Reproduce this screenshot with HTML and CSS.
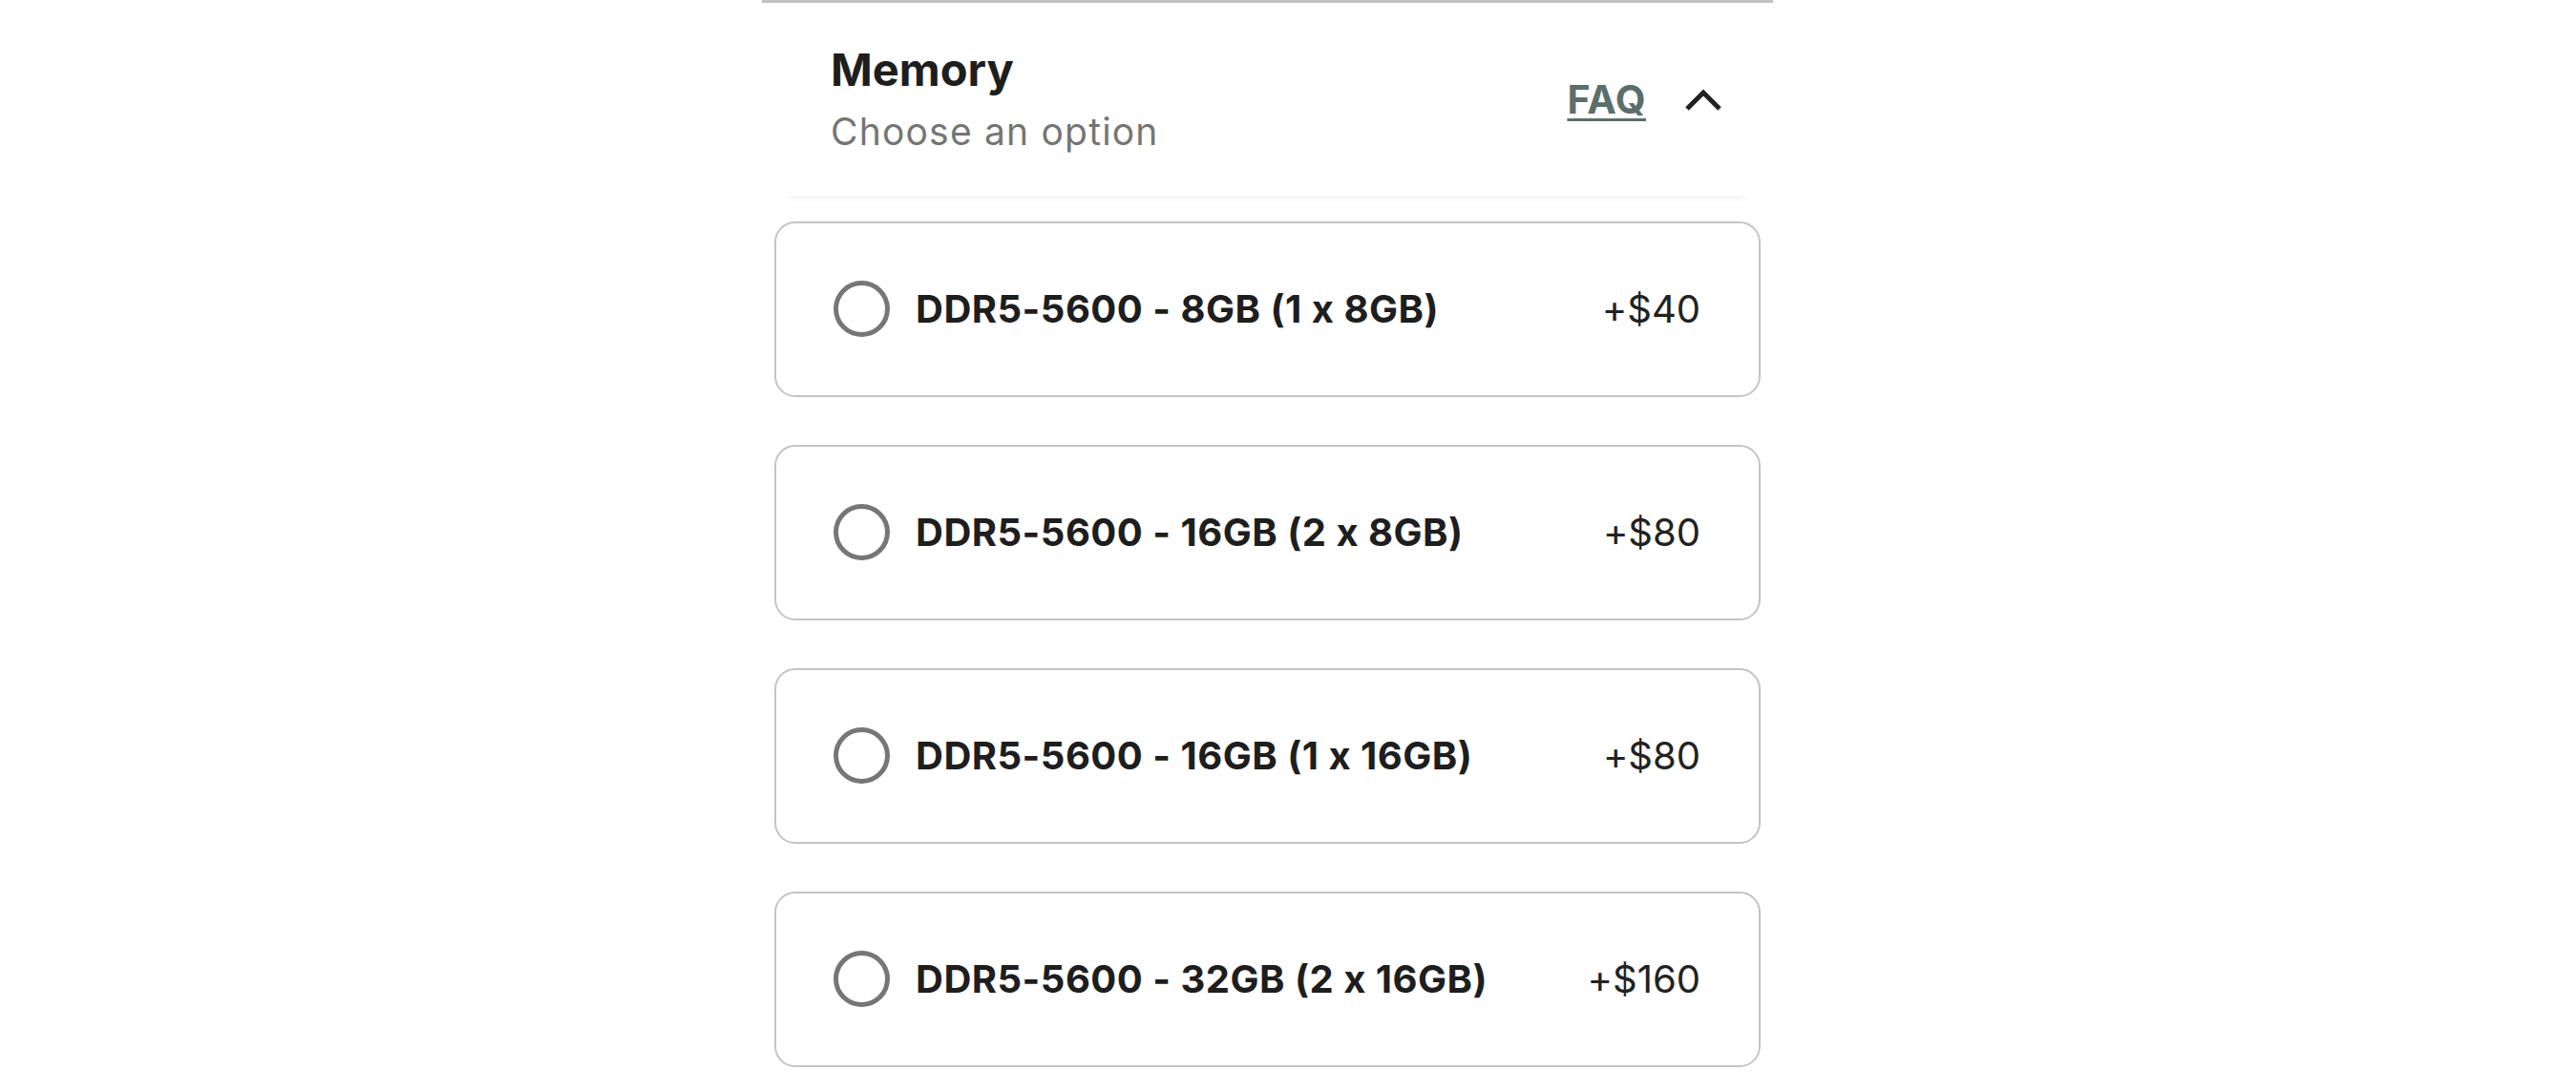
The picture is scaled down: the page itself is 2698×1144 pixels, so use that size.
FILE: index.html
```html
<html>
<head>
<title>Memory options</title>
<link rel="stylesheet" href="styles.css">
</head>
<body>

<div class="panel">
	<div class="header">
		<div class="titles">
			<div class="title">Memory</div>
			<div class="subtitle">Choose an option</div>
		</div>
		<div class="tools">
			<a class="faq" href="">FAQ</a>
			<svg class="chevron" width="40" height="26" viewBox="0 0 40 26">
				<path d="M3 23 L20 6 L37 23" fill="none" stroke="#222" stroke-width="5"/>
			</svg>
		</div>
	</div>

	<div class="options">
		<label class="option">
			<span class="radio"></span>
			<span class="name">DDR5-5600 - 8GB (1 x 8GB)</span>
			<span class="price">+$40</span>
		</label>
		<label class="option">
			<span class="radio"></span>
			<span class="name">DDR5-5600 - 16GB (2 x 8GB)</span>
			<span class="price">+$80</span>
		</label>
		<label class="option">
			<span class="radio"></span>
			<span class="name">DDR5-5600 - 16GB (1 x 16GB)</span>
			<span class="price">+$80</span>
		</label>
		<label class="option">
			<span class="radio"></span>
			<span class="name">DDR5-5600 - 32GB (2 x 16GB)</span>
			<span class="price">+$160</span>
		</label>
	</div>
</div>

</body>
</html>
```

FILE: styles.css
```css
body {
  margin: 0;
  background: #fff;
  font-family: Inter, "Liberation Sans", sans-serif;
  font-feature-settings: "calt" 0;
  color: #222;
}

.panel {
  width: 1059px;
  margin-left: 798px;
  border-top: 3px solid #c2c0c0;
}

.header {
  display: flex;
  justify-content: space-between;
  align-items: center;
  margin: 0 24px;
  padding: 42px 29px 44px 48px;
  box-shadow: 0 7px 8px -6px rgba(0, 0, 0, 0.09);
}

.title {
  font-size: 47px;
  line-height: 56px;
  font-weight: 700;
  color: #1e1e1e;
}

.subtitle {
  margin-top: 14px;
  font-size: 39px;
  line-height: 46px;
  letter-spacing: 1.2px;
  color: #757575;
}

.tools {
  display: flex;
  align-items: center;
  gap: 40px;
  padding-top: 2px;
}

.faq {
  font-size: 41px;
  font-weight: 700;
  letter-spacing: 0.5px;
  color: #5a6f6b;
  text-decoration: underline;
  text-decoration-thickness: 3px;
  text-underline-offset: 5px;
}

.chevron {
  display: block;
}

.options {
  display: flex;
  flex-direction: column;
  gap: 50px;
  margin: 27px 13px 0 13px;
}

.option {
  display: flex;
  align-items: center;
  height: 178px;
  padding: 0 61px 2px 60px;
  border: 2px solid #c4c4c4;
  border-radius: 22px;
}

.radio {
  box-sizing: border-box;
  width: 59px;
  height: 59px;
  border: 5px solid #767676;
  border-radius: 50%;
  flex: none;
}

.name {
  margin-left: 27px;
  font-size: 40px;
  font-weight: 700;
  letter-spacing: 0.5px;
  color: #1e1e1e;
}

.price {
  margin-left: auto;
  font-size: 40px;
  color: #222;
}
```
